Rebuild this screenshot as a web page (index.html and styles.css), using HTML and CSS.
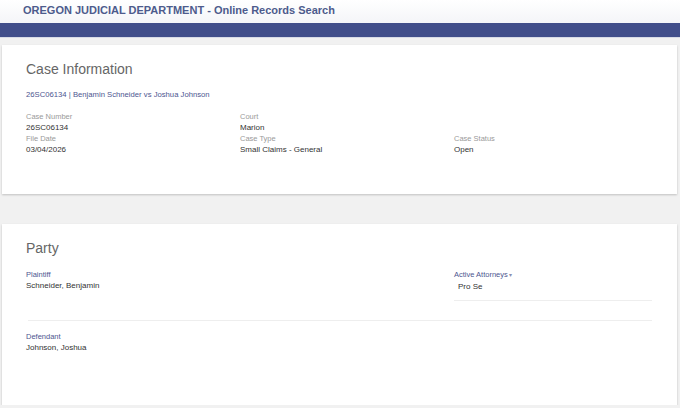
FILE: index.html
```html
<!DOCTYPE html>
<html>
<head>
    <title>Online Records Search</title>
    <link rel="stylesheet" href="styles.css">
</head>
<body>
    <div class="header">
        <div class="brand">OREGON JUDICIAL DEPARTMENT - Online Records Search</div>
    </div>
    <div class="navbar"></div>

    <div class="page">
        <div class="card case-card">
            <h2>Case Information</h2>
            <div class="case-title">26SC06134 | Benjamin Schneider vs Joshua Johnson</div>
            <div class="info-grid">
                <div class="field">
                    <div class="label">Case Number</div>
                    <div class="value">26SC06134</div>
                </div>
                <div class="field">
                    <div class="label">Court</div>
                    <div class="value">Marion</div>
                </div>
                <div class="field"></div>
                <div class="field">
                    <div class="label">File Date</div>
                    <div class="value">03/04/2026</div>
                </div>
                <div class="field">
                    <div class="label">Case Type</div>
                    <div class="value">Small Claims - General</div>
                </div>
                <div class="field">
                    <div class="label">Case Status</div>
                    <div class="value">Open</div>
                </div>
            </div>
        </div>

        <div class="card party-card">
            <h2>Party</h2>
            <div class="party-row">
                <div class="party-name">
                    <div class="label blue">Plaintiff</div>
                    <div class="value">Schneider, Benjamin</div>
                </div>
                <div class="attorneys">
                    <div class="label blue">Active Attorneys<span class="caret">&#9662;</span></div>
                    <div class="attorney">Pro Se</div>
                </div>
            </div>
            <div class="divider"></div>
            <div class="party-row defendant">
                <div class="party-name">
                    <div class="label blue">Defendant</div>
                    <div class="value">Johnson, Joshua</div>
                </div>
            </div>
        </div>
    </div>
</body>
</html>
```

FILE: styles.css
```css
body {
    margin: 0;
    font-family: "Liberation Sans", Arial, sans-serif;
    background-color: #f1f1f1;
    color: #333;
}
.header {
    height: 23px;
    background: linear-gradient(#ffffff, #f4f5f8);
}
.brand {
    padding: 4px 0 0 23px;
    font-size: 11px;
    font-weight: bold;
    color: #4d5b8c;
}
.navbar {
    height: 14px;
    background-color: #414e8a;
    border-bottom: 1px solid #d8dbe6;
}
.page {
    padding: 7px 3px 0 2px;
}
.card {
    background-color: #fff;
    box-shadow: 0 1px 2px rgba(0, 0, 0, 0.2);
    padding: 16px 24px 0 24px;
    box-sizing: border-box;
}
.case-card {
    height: 149px;
    margin-bottom: 30px;
}
.party-card {
    height: 181px;
}
h2 {
    margin: 0;
    font-size: 14px;
    font-weight: normal;
    color: #666;
}
.case-title {
    margin-top: 13px;
    font-size: 7.7px;
    color: #4d5690;
}
.info-grid {
    display: grid;
    grid-template-columns: 214px 214px 214px;
    margin-top: 13px;
}
.label {
    font-size: 7.5px;
    color: #9a9a9a;
    line-height: 10px;
}
.label.blue {
    color: #4d5690;
}
.value {
    font-size: 8px;
    line-height: 12px;
    color: #333;
}
.caret {
    font-size: 6px;
    color: #8a8fb0;
    margin-left: 1px;
}
.party-row {
    display: flex;
    margin-top: 14px;
}
.party-name {
    width: 428px;
}
.attorneys {
    width: 198px;
    height: 30px;
    border-bottom: 1px solid #eeeeee;
}
.attorney {
    font-size: 8px;
    line-height: 12px;
    padding: 1px 0 0 4px;
}
.divider {
    margin: 19px 0 0 2px;
    width: 624px;
    border-top: 1px solid #eeeeee;
}
.defendant {
    margin-top: 11px;
}
```
